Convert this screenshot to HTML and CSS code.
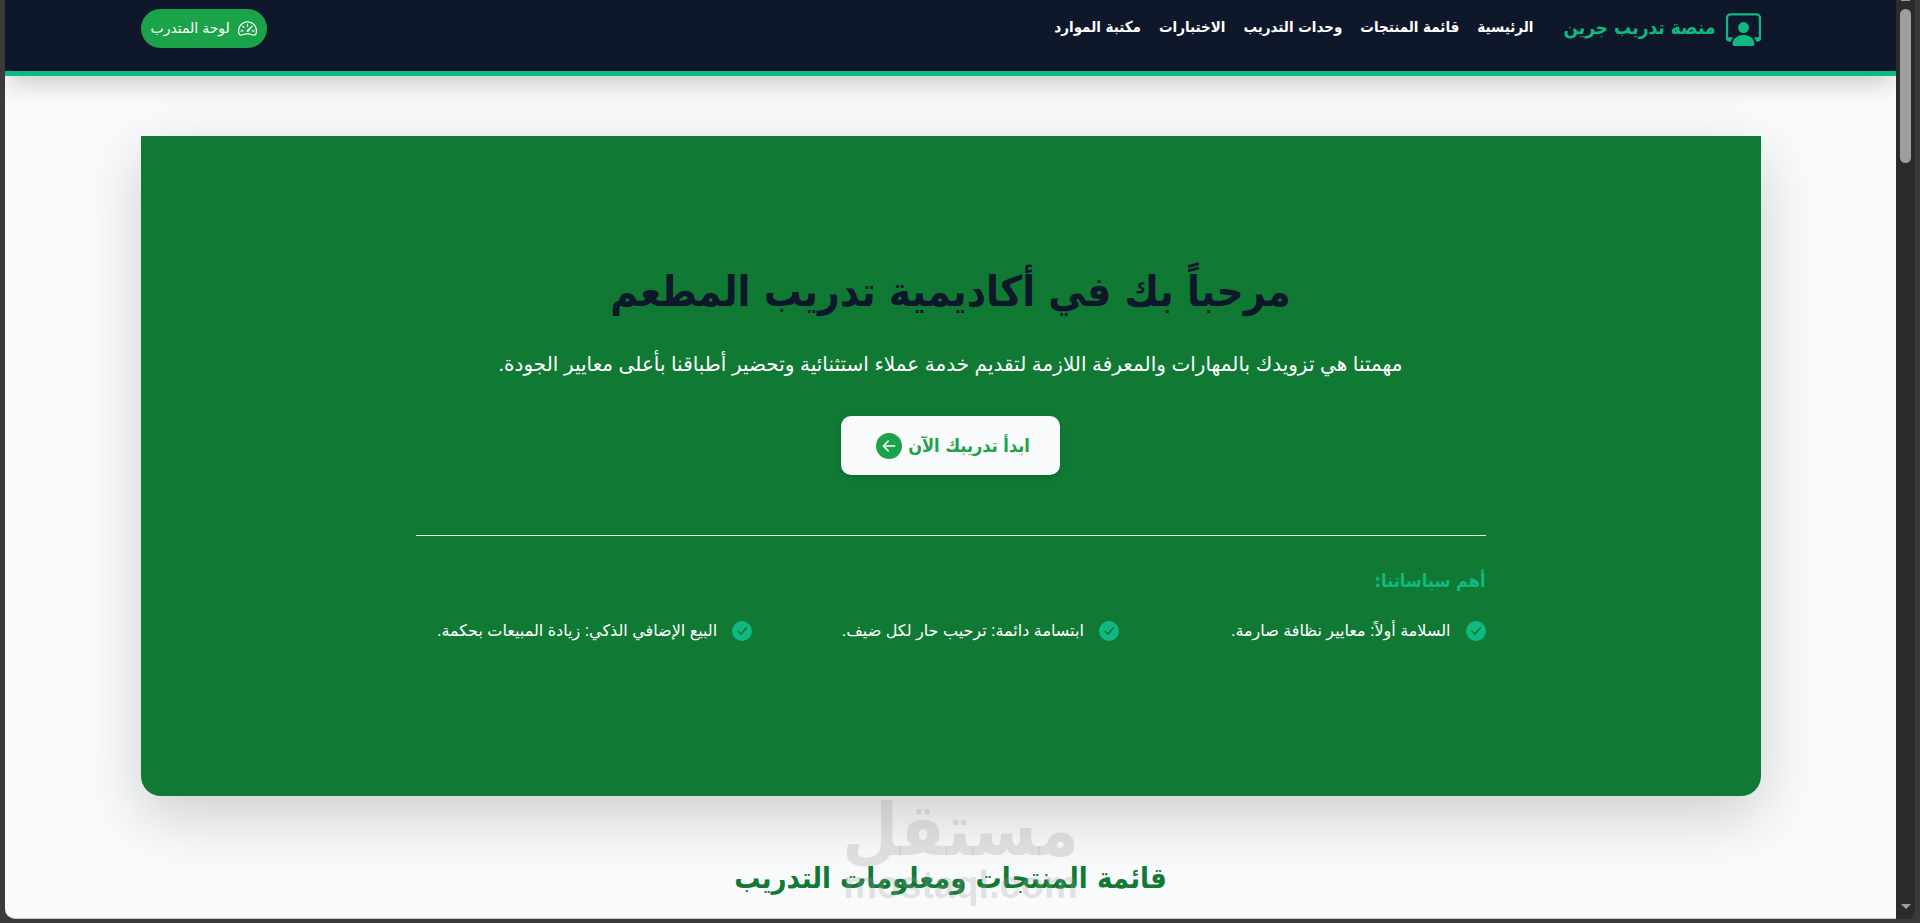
FILE: index.html
```html
<!DOCTYPE html>
<html lang="ar" dir="rtl">
<head>
<meta charset="utf-8">
<title>منصة تدريب جرين</title>
<link rel="stylesheet" href="styles.css">
</head>
<body>
<div class="window">
  <div class="page">
    <header class="topbar">
      <div class="container topbar-inner">
        <a class="brand" href="#">
          <svg class="brand-icon" viewBox="0 0 16 16" fill="currentColor" aria-hidden="true"><path d="M4 16s-1 0-1-1 1-4 5-4 5 3 5 4-1 1-1 1zm4-5.95a2.5 2.5 0 1 0 0-5 2.5 2.5 0 0 0 0 5"/><path d="M2 1a2 2 0 0 0-2 2v9.500A1.500 1.500 0 0 0 1.500 14h.653a5.400 5.400 0 0 1 1.066-2H1V3a1 1 0 0 1 1-1h12a1 1 0 0 1 1 1v9h-2.219c.554.654.89 1.373 1.066 2h.653a1.500 1.500 0 0 0 1.500-1.500V3a2 2 0 0 0-2-2z"/></svg>
          <span>منصة تدريب جرين</span>
        </a>
        <nav class="nav">
          <a href="#">الرئيسية</a>
          <a href="#">قائمة المنتجات</a>
          <a href="#">وحدات التدريب</a>
          <a href="#">الاختبارات</a>
          <a href="#">مكتبة الموارد</a>
        </nav>
        <a class="pill" href="#">
          <svg class="pill-icon" viewBox="0 0 16 16" fill="currentColor" aria-hidden="true"><path d="M8 4a.5.5 0 0 1 .5.5V6a.5.5 0 0 1-1 0V4.500A.5.5 0 0 1 8 4M3.732 5.732a.5.5 0 0 1 .707 0l.915.914a.5.5 0 1 1-.708.708l-.914-.915a.5.5 0 0 1 0-.707M2 10a.5.5 0 0 1 .5-.5h1.586a.5.5 0 0 1 0 1H2.500A.5.5 0 0 1 2 10m9.500 0a.5.5 0 0 1 .5-.5h1.500a.5.5 0 0 1 0 1H12a.5.5 0 0 1-.5-.5m.754-4.246a.39.39 0 0 0-.527-.02L7.547 9.310a.91.91 0 1 0 1.302 1.258l3.434-4.297a.39.39 0 0 0-.029-.518z"/><path fill-rule="evenodd" d="M0 10a8 8 0 1 1 15.547 2.661c-.442 1.253-1.845 1.602-2.932 1.250C11.309 13.488 9.475 13 8 13c-1.474 0-3.310.488-4.615.911-1.087.352-2.490.003-2.932-1.250A8 8 0 0 1 0 10m8-7a7 7 0 0 0-6.603 9.329c.203.575.923.876 1.680.630C4.397 12.533 6.358 12 8 12s3.604.532 4.923.960c.757.245 1.477-.056 1.680-.631A7 7 0 0 0 8 3"/></svg>
          <span>لوحة المتدرب</span>
        </a>
      </div>
    </header>

    <main class="container main">
      <section class="hero">
        <h1 class="hero-title">مرحباً بك في أكاديمية تدريب المطعم</h1>
        <p class="hero-text">مهمتنا هي تزويدك بالمهارات والمعرفة اللازمة لتقديم خدمة عملاء استثنائية وتحضير أطباقنا بأعلى معايير الجودة.</p>
        <a class="cta" href="#">
          <span>ابدأ تدريبك الآن</span>
          <svg class="cta-icon" viewBox="0 0 16 16" fill="currentColor" aria-hidden="true"><path d="M8 0a8 8 0 1 0 0 16A8 8 0 0 0 8 0m3.500 7.500a.5.5 0 0 1 0 1H5.707l2.147 2.146a.5.5 0 0 1-.708.708l-3-3a.5.5 0 0 1 0-.708l3-3a.5.5 0 1 1 .708.708L5.707 7.500z"/></svg>
        </a>
        <div class="policies">
          <h2 class="policies-title">أهم سياساتنا:</h2>
          <ul class="policy-list">
            <li><svg class="check" viewBox="0 0 16 16" aria-hidden="true"><circle cx="8" cy="8" r="8"/><path d="M4.900 8.200 7.200 10.500 11.500 5.500"/></svg><span>السلامة أولاً: معايير نظافة صارمة.</span></li>
            <li><svg class="check" viewBox="0 0 16 16" aria-hidden="true"><circle cx="8" cy="8" r="8"/><path d="M4.900 8.200 7.200 10.500 11.500 5.500"/></svg><span>ابتسامة دائمة: ترحيب حار لكل ضيف.</span></li>
            <li><svg class="check" viewBox="0 0 16 16" aria-hidden="true"><circle cx="8" cy="8" r="8"/><path d="M4.900 8.200 7.200 10.500 11.500 5.500"/></svg><span>البيع الإضافي الذكي: زيادة المبيعات بحكمة.</span></li>
          </ul>
        </div>
      </section>
      <h2 class="section-title">قائمة المنتجات ومعلومات التدريب</h2>
    </main>
    <div class="watermark" aria-hidden="true">
      <span class="watermark-name">مستقل</span>
      <span class="watermark-site">mostaql.com</span>
    </div>
  </div>
  <div class="scrollbar" aria-hidden="true">
    <span class="arrow-up"></span>
    <span class="thumb"></span>
    <span class="arrow-down"></span>
  </div>
</div>
</body>
</html>
```
FILE: styles.css
```css
* { box-sizing: border-box; }

body {
  margin: 0;
  background: #3a3a3a;
  color: #fff;
  font-family: "Liberation Sans", "DejaVu Sans", sans-serif;
  font-size: 16px;
}

a { color: inherit; text-decoration: none; }
h1, h2, p, ul { margin: 0; padding: 0; }
svg { display: block; flex: none; }

.brand,
.nav,
.cta,
.hero-title,
.policies-title,
.section-title,
.watermark-name {
  font-family: "DejaVu Sans Condensed", "DejaVu Sans", sans-serif;
  font-weight: 700;
}

.window {
  display: flex;
  flex-direction: row-reverse;
  height: 100vh;
  padding: 0 5px 4px;
}

.page {
  position: relative;
  flex: 1;
  overflow: hidden;
  background: #f9fafc;
  border-bottom: 1px solid #c4c6c8;
  border-bottom-left-radius: 10px;
}

.container {
  width: 100%;
  max-width: 1650px;
  margin: 0 auto;
  padding: 0 15px;
}

.topbar {
  position: relative;
  padding: 9px 0 23px;
  background: #0f172a;
  border-bottom: 5px solid #10b981;
  box-shadow: 0 12px 24px -4px rgba(0, 0, 0, .18);
}

.topbar-inner { display: flex; align-items: flex-start; white-space: nowrap; }

.brand {
  display: flex;
  align-items: flex-start;
  gap: 10px;
  color: #10b981;
  font-size: 19px;
  line-height: 36px;
}

.brand-icon { width: 35px; height: 35px; margin-top: 2px; }

.nav {
  display: flex;
  flex: 1;
  gap: 18px;
  margin-right: 30px;
  font-size: 15px;
  line-height: 36px;
}

.pill {
  display: flex;
  align-items: center;
  gap: 8px;
  padding: 0 10px;
  border-radius: 20px;
  background: #1ba34a;
  font-size: 14px;
  line-height: 39px;
}

.pill-icon { width: 19px; height: 19px; }

.main { padding-top: 60px; text-align: center; }

.hero {
  display: flex;
  flex-direction: column;
  align-items: center;
  padding: 120px 20px 150px;
  border-radius: 0 0 20px 20px;
  background: #107a35;
  box-shadow: 0 20px 60px rgba(0, 0, 0, .175);
}

.hero-title { color: #0f172a; font-size: 42px; line-height: 72px; }
.hero-text { margin-top: 16px; font-size: 20px; line-height: 40px; }

.cta {
  display: flex;
  align-items: center;
  gap: 6px;
  margin-top: 32px;
  padding: 0 30px 0 35px;
  border-radius: 10px;
  background: #f9fafc;
  box-shadow: 0 2px 5px rgba(0, 0, 0, .15);
  color: #1ba34a;
  font-size: 18px;
  line-height: 59px;
}

.cta-icon { width: 26px; height: 26px; }

.policies {
  width: 100%;
  max-width: 1070px;
  margin-top: 60px;
  padding-top: 30px;
  border-top: 1px solid #e8f5ec;
  text-align: right;
}

.policies-title { color: #10b981; font-size: 18px; line-height: 30px; }

.policy-list {
  display: grid;
  grid-template-columns: repeat(3, 1fr);
  gap: 30px;
  margin-top: 20px;
  list-style: none;
  font-size: 16px;
  line-height: 30px;
  white-space: nowrap;
}

.policy-list li { display: flex; align-items: center; gap: 15px; }
.check { width: 20px; height: 20px; fill: #10b981; }
.check path {
  fill: none;
  stroke: #107a35;
  stroke-width: 1.3;
  stroke-linecap: round;
  stroke-linejoin: round;
}

.section-title { margin-top: 60px; color: #107a35; font-size: 29px; line-height: 44px; }

.watermark {
  position: absolute;
  left: 50%;
  bottom: 14px;
  display: flex;
  flex-direction: column;
  align-items: center;
  transform: translateX(-50%);
  margin-left: 10px;
  color: rgba(150, 150, 150, .26);
  font-weight: 700;
  pointer-events: none;
}

.watermark-name { font-size: 72px; line-height: 72px; }
.watermark-site { font-size: 38px; line-height: 38px; }

.scrollbar {
  display: flex;
  flex-direction: column;
  align-items: center;
  width: 19px;
  background: #2b2b2b;
  border-bottom-right-radius: 8px;
}

.arrow-up { width: 9px; height: 1px; background: #9c9f9e; }
.thumb { width: 11px; height: 154px; margin-top: 8px; border-radius: 6px; background: #9c9f9e; }

.arrow-down {
  margin: auto 0 10px;
  border: 5px solid transparent;
  border-top-color: #9c9f9e;
  border-bottom-width: 0;
}
```
